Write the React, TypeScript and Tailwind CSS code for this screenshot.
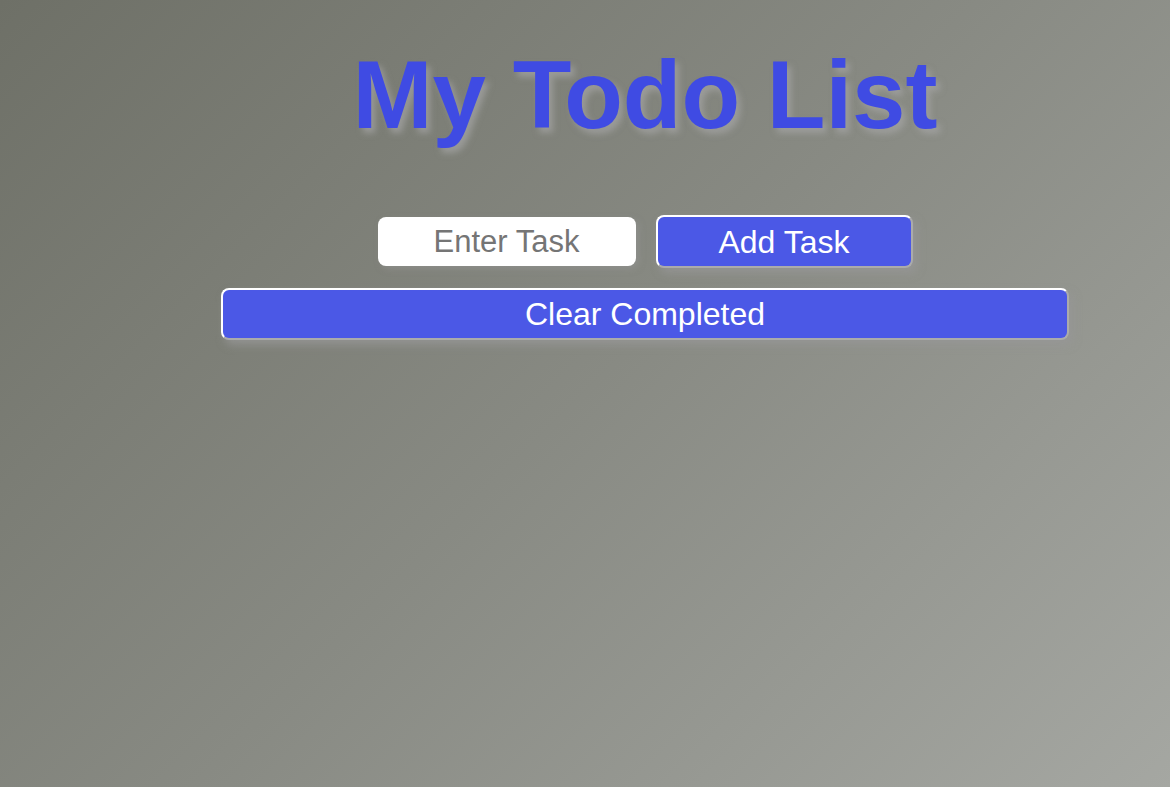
import React, { useState } from 'react';

type Task = { id: number; text: string; done: boolean };

export default function App() {
  const [tasks, setTasks] = useState<Task[]>([]);
  const [input, setInput] = useState('');

  const addTask = () => {
    if (!input.trim()) return;
    setTasks([...tasks, { id: Date.now(), text: input.trim(), done: false }]);
    setInput('');
  };

  const clearCompleted = () => setTasks(tasks.filter((t) => !t.done));

  return (
    <div className="min-h-screen w-full bg-[linear-gradient(135deg,#6e7067_0%,#888a83_50%,#a5a7a2_100%)] font-['Liberation_Sans',Arial,sans-serif]">
      <div className="flex flex-col items-center pl-[120px] pt-[47px]">
        {/* Title */}
        <h1 className="text-[96px] leading-none font-bold text-[#3f4be3] [text-shadow:4px_5px_6px_rgba(165,165,165,0.7)]">
          My Todo List
        </h1>

        {/* Input row */}
        <div className="mt-[72px] flex items-center gap-5">
          <input
            value={input}
            onChange={(e) => setInput(e.target.value)}
            placeholder="Enter Task"
            className="w-[258px] h-[49px] rounded-lg bg-white text-center text-[31px] text-gray-700 placeholder:text-[#757575] outline-none shadow-[3px_3px_6px_rgba(150,150,150,0.5)]"
          />
          <button
            onClick={addTask}
            className="w-[257px] h-[53px] rounded-lg bg-[#4b58e6] text-white text-[32px] border-2 border-white [border-style:outset] shadow-[4px_5px_8px_rgba(150,150,150,0.8)]"
          >
            Add Task
          </button>
        </div>

        <button
          onClick={clearCompleted}
          className="mt-5 w-[848px] h-[52px] rounded-lg bg-[#4b58e6] text-white text-[32px] border-2 border-white [border-style:outset] shadow-[4px_5px_8px_rgba(150,150,150,0.8)]"
        >
          Clear Completed
        </button>

        <ul className="mt-4 w-[848px] flex flex-col gap-2">
          {tasks.map((t) => (
            <li
              key={t.id}
              onClick={() => setTasks(tasks.map((x) => (x.id === t.id ? { ...x, done: !x.done } : x)))}
              className={`text-2xl text-white ${t.done ? 'line-through opacity-60' : ''}`}
            >
              {t.text}
            </li>
          ))}
        </ul>
      </div>
    </div>
  );
}
